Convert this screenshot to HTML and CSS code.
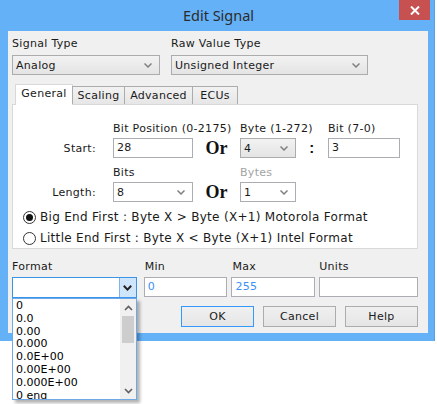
FILE: index.html
```html
<!DOCTYPE html>
<html>
<head>
<meta charset="utf-8">
<link rel="stylesheet" href="styles.css">
</head>
<body>
<div class="window">
  <div class="titlebar">
    <span></span>
    <span class="title">Edit Signal</span>
    <span class="close"><svg width="10" height="9" viewBox="0 0 10 9"><path d="M1 0.5 L9 8.5 M9 0.5 L1 8.5" stroke="#fff" stroke-width="2"/></svg></span>
  </div>
  <div class="content">
    <div class="toprow">
      <div class="field w148">
        <div class="lbl">Signal Type</div>
        <div class="select gray"><span>Analog</span><svg class="chev" width="8" height="5" viewBox="0 0 8 5"><path d="M0.5 0.5 L4 4 L7.5 0.5" fill="none" stroke="#808080" stroke-width="1.5"/></svg></div>
      </div>
      <div class="field w197">
        <div class="lbl">Raw Value Type</div>
        <div class="select gray"><span>Unsigned Integer</span><svg class="chev" width="8" height="5" viewBox="0 0 8 5"><path d="M0.5 0.5 L4 4 L7.5 0.5" fill="none" stroke="#808080" stroke-width="1.5"/></svg></div>
      </div>
    </div>

    <div class="tabs">
      <div class="tab active t-gen">General</div>
      <div class="tab t-sca">Scaling</div>
      <div class="tab t-adv">Advanced</div>
      <div class="tab t-ecu">ECUs</div>
    </div>
    <div class="panel">
      <div class="grid">
        <div></div>
        <div class="lbl">Bit Position (0-2175)</div>
        <div></div>
        <div class="lbl">Byte (1-272)</div>
        <div></div>
        <div class="lbl">Bit (7-0)</div>
        <div class="rowlbl">Start:</div>
        <div class="input">28</div>
        <div class="or">Or</div>
        <div class="select gray"><span>4</span><svg class="chev" width="8" height="5" viewBox="0 0 8 5"><path d="M0.5 0.5 L4 4 L7.5 0.5" fill="none" stroke="#808080" stroke-width="1.5"/></svg></div>
        <div class="colon">:</div>
        <div class="input">3</div>
      </div>
      <div class="grid second">
        <div></div>
        <div class="lbl">Bits</div>
        <div></div>
        <div class="lbl disabled">Bytes</div>
        <div></div>
        <div></div>
        <div class="rowlbl">Length:</div>
        <div class="select white"><span>8</span><svg class="chev" width="8" height="5" viewBox="0 0 8 5"><path d="M0.5 0.5 L4 4 L7.5 0.5" fill="none" stroke="#808080" stroke-width="1.5"/></svg></div>
        <div class="or">Or</div>
        <div class="select white"><span>1</span><svg class="chev" width="8" height="5" viewBox="0 0 8 5"><path d="M0.5 0.5 L4 4 L7.5 0.5" fill="none" stroke="#808080" stroke-width="1.5"/></svg></div>
        <div></div>
        <div></div>
      </div>
      <div class="radios">
        <div class="radio"><span class="circle checked"></span><span class="rtext">Big End First : Byte X &gt; Byte (X+1) Motorola Format</span></div>
        <div class="radio"><span class="circle"></span><span class="rtext">Little End First : Byte X &lt; Byte (X+1) Intel Format</span></div>
      </div>
    </div>

    <div class="bottomrow">
      <div class="field fmt">
        <div class="lbl">Format</div>
        <div class="combo">
          <span class="combo-text"></span>
          <span class="combo-btn"><svg width="9" height="6" viewBox="0 0 9 6"><path d="M0.8 0.8 L4.5 4.6 L8.2 0.8" fill="none" stroke="#222" stroke-width="2"/></svg></span>
        </div>
        <div class="droplist">
          <div class="items">
            <div>0</div>
            <div>0.0</div>
            <div>0.00</div>
            <div>0.000</div>
            <div>0.0E+00</div>
            <div>0.00E+00</div>
            <div>0.000E+00</div>
            <div>0 eng</div>
          </div>
          <div class="scrollbar">
            <div class="sb-arrow"><svg width="9" height="6" viewBox="0 0 9 6"><path d="M1 5 L4.5 1.5 L8 5" fill="none" stroke="#606060" stroke-width="1.6"/></svg></div>
            <div class="sb-thumb"></div>
            <div class="sb-track"></div>
            <div class="sb-arrow"><svg width="9" height="6" viewBox="0 0 9 6"><path d="M1 1 L4.5 4.5 L8 1" fill="none" stroke="#606060" stroke-width="1.6"/></svg></div>
          </div>
        </div>
      </div>
      <div class="field fmin">
        <div class="lbl">Min</div>
        <div class="input blue">0</div>
      </div>
      <div class="field fmax">
        <div class="lbl">Max</div>
        <div class="input blue">255</div>
      </div>
      <div class="field funits">
        <div class="lbl">Units</div>
        <div class="input"></div>
      </div>
    </div>

    <div class="buttons">
      <div class="btn default">OK</div>
      <div class="btn">Cancel</div>
      <div class="btn">Help</div>
    </div>
  </div>
</div>
</body>
</html>
```
FILE: styles.css
```css
* { box-sizing: border-box; }
html, body { margin: 0; padding: 0; background: #ffffff; }
body {
  font-family: "DejaVu Sans", "Liberation Sans", sans-serif;
  font-size: 11px;
  letter-spacing: 0.3px;
  color: #1a1a1a;
  width: 437px;
  height: 404px;
  overflow: hidden;
}
.window {
  width: 435px;
  height: 341px;
  background: #64b1f7;
  border-right: 1px solid #5a9fde;
}
.titlebar {
  height: 31px;
  display: grid;
  grid-template-columns: 1fr auto 1fr;
  align-items: start;
}
.title {
  font-family: "Noto Sans", "Open Sans", sans-serif;
  font-size: 14.5px;
  letter-spacing: 0;
  color: #2b2b2b;
  line-height: 20px;
  padding-top: 5px;
  padding-left: 3px;
}
.close {
  justify-self: end;
  margin-right: 4px;
  width: 31px;
  height: 20px;
  background: #c75050;
  display: flex;
  align-items: center;
  justify-content: center;
}
.content {
  margin-left: 8px;
  width: 420px;
  height: 302px;
  background: #f0f0f0;
  padding: 6px 10px 0 4px;
}
.lbl { height: 14px; line-height: 14px; white-space: nowrap; }
.lbl.disabled { color: #a3a3a3; }
.field .lbl { margin-bottom: 4px; }
.toprow { display: flex; gap: 11px; }
.w148 { width: 148px; }
.w197 { width: 197px; }

.select {
  height: 20px;
  border: 1px solid #acacac;
  display: flex;
  align-items: center;
  justify-content: space-between;
  padding: 0 7px 0 3px;
  white-space: nowrap;
}
.select.gray { background: linear-gradient(#f2f2f2, #e4e4e4); }
.select.white { background: #ffffff; border-color: #abadb3; }
.chev { flex: none; }

.tabs {
  margin-top: 9px;
  height: 20px;
  display: flex;
  align-items: flex-end;
  padding-left: 3px;
  position: relative;
  z-index: 2;
}
.tab {
  height: 18px;
  line-height: 17px;
  border: 1px solid #acacac;
  border-bottom: none;
  background: linear-gradient(#f2f2f2, #e6e6e6);
  text-align: center;
  margin-left: -1px;
  white-space: nowrap;
}
.tab.active {
  height: 21px;
  line-height: 18px;
  background: #ffffff;
  border-color: #d9d9d9;
  margin-bottom: -1px;
  margin-left: 0;
}
.t-gen { width: 58px; }
.t-sca { width: 53px; margin-left: -1px; }
.t-adv { width: 69px; }
.t-ecu { width: 46px; }

.panel {
  width: 406px;
  height: 145px;
  background: #ffffff;
  border: 1px solid #d9d9d9;
  padding-top: 17px;
}
.grid {
  display: grid;
  grid-template-columns: 100px 80px 47px 56px 32px 72px;
  grid-template-rows: 14px 20px;
  row-gap: 2px;
  align-items: center;
}
.grid.second { margin-top: 8px; }
.rowlbl { text-align: right; padding-right: 17px; }
.input {
  height: 20px;
  border: 1px solid #abadb3;
  background: #ffffff;
  padding-left: 3px;
  line-height: 18px;
}
.input.blue { color: #3b8ff5; }
.or {
  font-family: "Liberation Serif", serif;
  font-weight: bold;
  font-size: 18px;
  letter-spacing: 0;
  text-align: center;
  line-height: 20px;
  color: #111;
}
.colon {
  font-family: "Liberation Sans", sans-serif;
  font-weight: bold;
  font-size: 15px;
  text-align: center;
  line-height: 20px;
  color: #111;
}
.radios {
  margin-top: 7px;
  padding-left: 10px;
  display: flex;
  flex-direction: column;
  gap: 5px;
}
.radio {
  height: 16px;
  display: flex;
  align-items: center;
  gap: 4px;
  white-space: nowrap;
}
.rtext { font-size: 12px; }
.circle {
  width: 13px;
  height: 13px;
  border-radius: 50%;
  border: 1px solid #333;
  background: #fff;
  display: flex;
  align-items: center;
  justify-content: center;
  flex: none;
}
.circle.checked::after {
  content: "";
  width: 7px;
  height: 7px;
  border-radius: 50%;
  background: #111;
}

.bottomrow {
  margin-top: 11px;
  display: flex;
}
.fmt { width: 125px; position: relative; }
.fmin { width: 84px; margin-left: 7px; }
.fmax { width: 84px; margin-left: 4px; }
.funits { width: 99px; margin-left: 4px; }
.fmin .lbl, .fmax .lbl { padding-left: 1px; }
.bottomrow .field .lbl { margin-bottom: 3px; }
.combo {
  height: 21px;
  border: 1px solid #3c94e8;
  background: #fff;
  display: flex;
}
.combo-text { flex: 1; }
.combo-btn {
  width: 17px;
  background: #cfe6fa;
  border-left: 1px solid #7eb4ea;
  display: flex;
  align-items: center;
  justify-content: center;
}
.droplist {
  position: absolute;
  top: 38px;
  left: 0;
  width: 125px;
  height: 102px;
  border: 1px solid #6ea8e6;
  background: #fff;
  display: flex;
  overflow: hidden;
  box-shadow: 3px 3px 3px rgba(0,0,0,0.3);
  z-index: 5;
}
.items {
  flex: 1;
  padding-left: 3px;
  padding-top: 1px;
  color: #000;
  letter-spacing: 0;
}
.items div { height: 12.8px; line-height: 12.8px; white-space: nowrap; }
.scrollbar {
  width: 16px;
  background: #f0f0f0;
  display: flex;
  flex-direction: column;
  align-items: center;
}
.sb-arrow {
  height: 17px;
  width: 16px;
  display: flex;
  align-items: center;
  justify-content: center;
  flex: none;
}
.sb-thumb {
  width: 12px;
  height: 27px;
  background: #cdcdcd;
  flex: none;
}
.sb-track { flex: 1; }

.buttons {
  margin-top: 8px;
  display: flex;
  justify-content: flex-end;
  gap: 9px;
}
.btn {
  width: 73px;
  height: 21px;
  border: 1px solid #acacac;
  background: linear-gradient(#f0f0f0, #e5e5e5);
  text-align: center;
  line-height: 19px;
}
.btn.default { border-color: #3399ff; }
```
